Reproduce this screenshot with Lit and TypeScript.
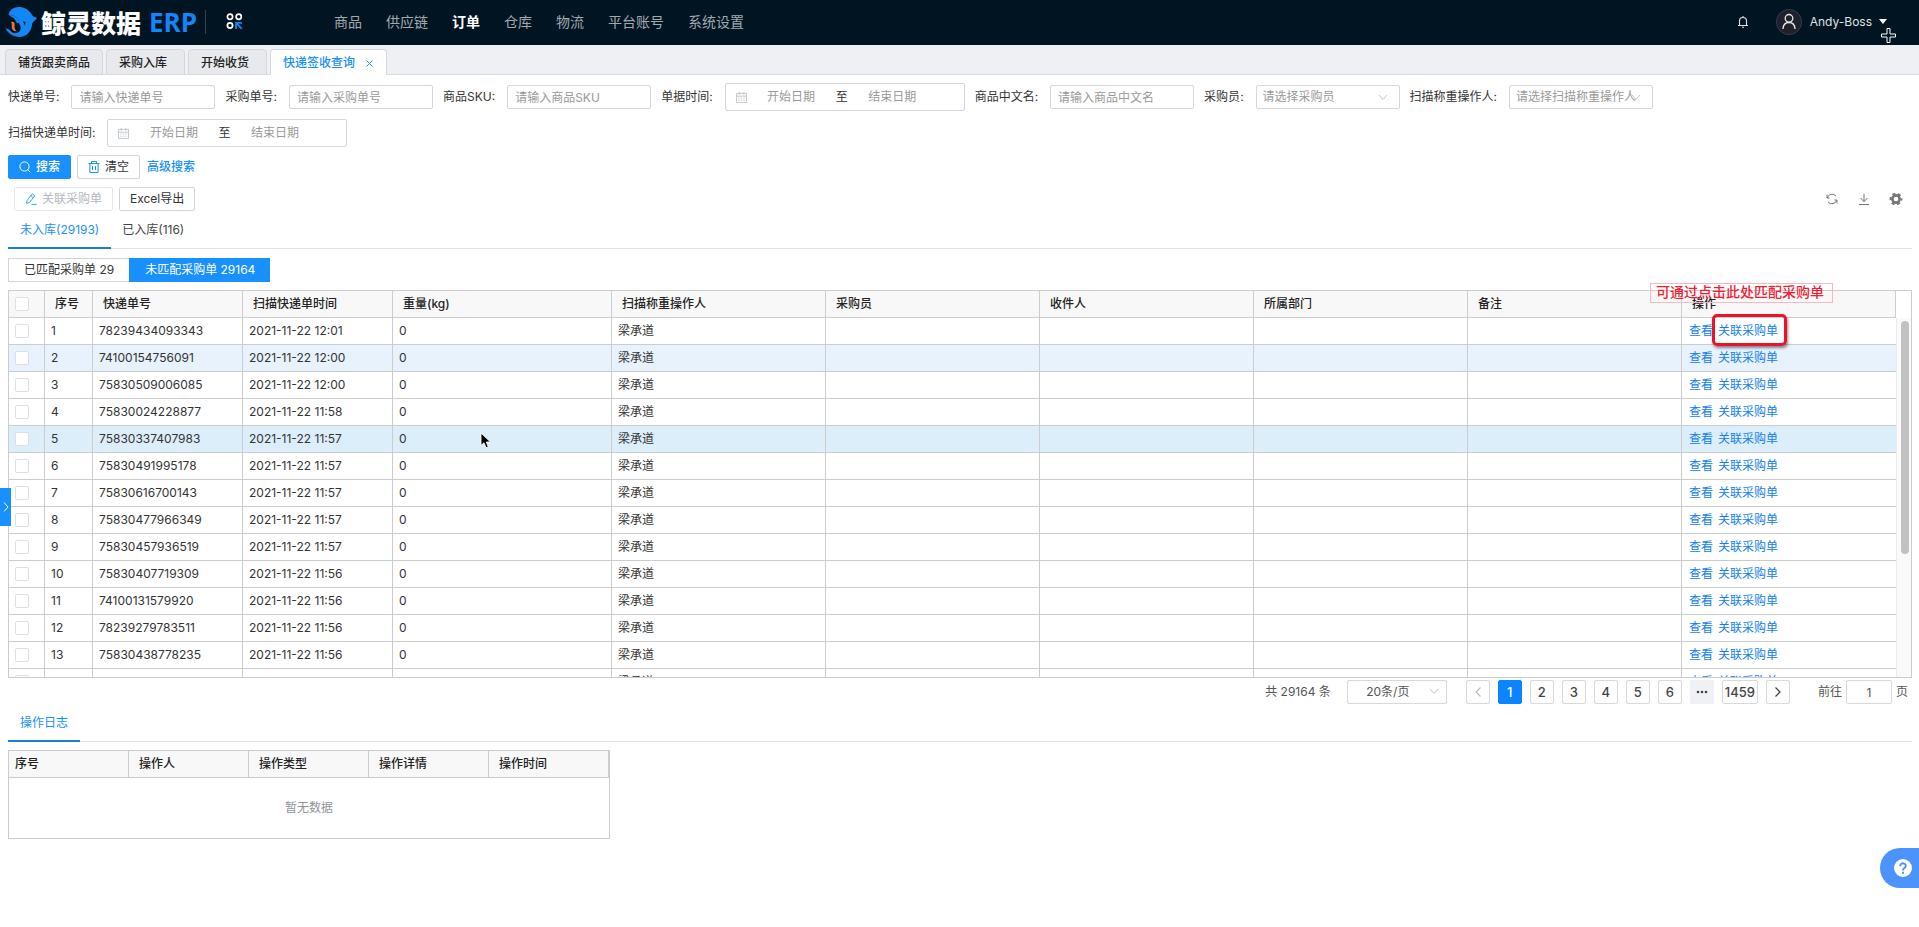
import { LitElement, html, css, nothing } from "lit";
import { customElement } from "lit/decorators.js";
import { classMap } from "lit/directives/class-map.js";

const chevronDown = html`<svg class="chev" viewBox="0 0 10 10" width="10" height="10" aria-hidden="true"><path d="M1 3l4 4.500L9 3" fill="none" stroke="#c0c4cc" stroke-width="1"/></svg>`;

const calendar = html`<svg viewBox="0 0 12 12" width="11" height="11" aria-hidden="true"><g fill="none" stroke="#c0c4cc"><path d="M.5 1.500h11v10H.5zM.5 4.500h11M3.500 0v3M8.500 0v3"/><path d="M2.500 6.500h7M2.500 9h7" stroke-dasharray="1.400 1.400"/></g></svg>`;

@customElement("top-bar")
class TopBar extends LitElement {
  static styles = css`
    :host { display: block; }
    .bar { display: flex; align-items: center; box-sizing: border-box; height: 45px; background: #001422; color: #fff; padding: 0 32px 2px 5px; }
    .brand { display: flex; align-items: center; font: 900 25px/32px "Noto Sans CJK SC", sans-serif; }
    .brand svg { margin-right: 4px; }
    .erp { color: #1287fb; font: bold 26px/32px "Open Sans", sans-serif; margin-left: 8px; }
    .rule { width: 1px; height: 24px; background: #33434f; margin: 0 20px 0 8px; }
    .apps, .bell, .user { background: none; border: 0; padding: 0; color: inherit; display: flex; align-items: center; font: inherit; }
    .menu { display: flex; gap: 24px; margin-left: 91px; flex: 1; }
    .menu a { color: #a1a9af; text-decoration: none; white-space: nowrap; }
    .menu a.on { color: #fff; font-weight: 700; }
    .bell { margin-right: 27px; }
    .user { color: #dfe2e4; font-size: 12px; }
    .user .face { margin-right: 8px; }
    .user .caret { margin-left: 7px; }
  `;
  render() {
    const items = ["商品", "供应链", "订单", "仓库", "物流", "平台账号", "系统设置"];
    return html`<header class="bar">
      <div class="brand">
        <svg viewBox="0 0 32 32" width="32" height="32" aria-hidden="true">
          <path d="M3.500 8.500C4.500 3.500 9.500.5 15 1c6 .5 10 4 12.300 8.300 1 1.800 2.500 2 4.700 2.400-1.300 2.800-3.600 3.600-4.800 5.800C26.500 26 21 31 14.500 31 8 31 3 27.500.4 22.300c2.600.4 4.800 1.700 6.200 3.700 2.600 2 6.200 1.500 8.200-1 1.400-2 1-4 .2-5.800L13.800 17c-1.800 0-2.700-1-3.300-2.600C9 11.400 5.500 11 3.500 8.500z" fill="#1287f5"/>
          <path d="M5 9c4 .3 7.500 2 9 6" fill="none" stroke="#0a5fb5" stroke-width=".7"/>
          <path d="M17.800 15.300l2.700.6-.5 3.500z" fill="#001422"/>
          <path d="M6 16c3-1 4 1 3.600 3.500C9.300 22 10 24 11.800 25.200 8.500 25.500 6.500 23.500 6.700 20.500c.1-1.800.3-3-.7-4.500z" fill="#ee6f35"/>
        </svg>
        <span>鲸灵数据</span><span class="erp">ERP</span>
      </div>
      <span class="rule"></span>
      <button class="apps" aria-label="应用">
        <svg viewBox="0 0 17 17" width="17" height="17" aria-hidden="true"><g fill="none" stroke="#fff" stroke-width="1.700"><circle cx="4" cy="3.700" r="2.600"/><circle cx="12.700" cy="3.700" r="2.600"/><circle cx="4" cy="12.500" r="2.600"/></g><path d="M10 16V9.800h6M10.500 10.300l5.300 5.500" fill="none" stroke="#1287fb" stroke-width="1.800"/></svg>
      </button>
      <nav class="menu">${items.map((t) => html`<a href="#" class=${t === "订单" ? "on" : ""}>${t}</a>`)}</nav>
      <button class="bell" aria-label="消息">
        <svg viewBox="0 0 12 12" width="12" height="12" aria-hidden="true"><path d="M1 9.500h10M2.500 9.500V5a3.500 3.500 0 017 0v4.500M6 0v1.500M5 11.300h2" fill="none" stroke="#dfe2e4" stroke-width="1.100"/></svg>
      </button>
      <button class="user">
        <svg class="face" viewBox="0 0 26 26" width="26" height="26" aria-hidden="true"><circle cx="13" cy="13" r="12.600" fill="#20202c" stroke="#4b5060" stroke-width=".6"/><circle cx="13" cy="9.300" r="3.800" fill="none" stroke="#e8e8ea" stroke-width="1.300"/><path d="M7 20c.2-4 2.500-6.500 6-6.500s5.800 2.500 6 6.500" fill="none" stroke="#e8e8ea" stroke-width="1.300"/></svg>
        Andy-Boss
        <svg class="caret" viewBox="0 0 8 5" width="8" height="5" aria-hidden="true"><path d="M0 0h8L4 5z" fill="#fff"/></svg>
      </button>
    </header>`;
  }
}

@customElement("page-tabs")
class PageTabs extends LitElement {
  static styles = css`
    :host { display: block; }
    .tabs { display: flex; align-items: flex-end; gap: 3px; height: 29px; padding: 0 5px; background: #eff0f4; border-bottom: 1px solid #d9dce2; }
    .tab { display: flex; align-items: center; box-sizing: border-box; height: 26px; min-width: 79px; padding: 2px 12px 0; margin-bottom: -1px; border: 1px solid #d4d7dd; border-radius: 4px 4px 0 0; background: #e8e9ed; color: #222; font: inherit; font-weight: 500; white-space: nowrap; }
    .on { background: #fff; color: #1890ff; border-bottom-color: #fff; }
    .on svg { margin-left: 10px; }
  `;
  render() {
    return html`<nav class="tabs">
      ${["铺货跟卖商品", "采购入库", "开始收货"].map((t) => html`<button class="tab">${t}</button>`)}
      <button class="tab on">快递签收查询<svg viewBox="0 0 9 9" width="9" height="9" aria-hidden="true"><path d="M1.500 1.500l6 6M7.500 1.500l-6 6" stroke="#1890ff" fill="none"/></svg></button>
    </nav>`;
  }
}

@customElement("search-form")
class SearchForm extends LitElement {
  static styles = css`
    :host { display: block; }
    .form { display: flex; flex-wrap: wrap; gap: 8px 10px; }
    .item { display: flex; align-items: center; height: 28px; color: #333; }
    .item > label { padding-right: 12px; white-space: nowrap; }
    .box { box-sizing: border-box; width: 144px; height: 24px; border: 1px solid #d6d6da; border-radius: 2px; background: #fff; padding: 0 7px; margin: 0; font: inherit; color: #999; appearance: none; outline: 0; }
    .pick { position: relative; display: flex; }
    .pick .box { padding: 0 6px; }
    .pick .chev { position: absolute; right: 12px; top: 7px; pointer-events: none; }
    .range { display: flex; align-items: center; box-sizing: border-box; width: 240px; height: 28px; border: 1px solid #d6d6da; border-radius: 2px; padding: 0 27px 0 10px; }
    .range input { flex: 1; min-width: 0; padding: 0; border: 0; text-align: center; font: inherit; outline: 0; background: none; }
    ::placeholder { color: #999; opacity: 1; }
  `;
  text(id: string, label: string, ph: string) {
    return html`<div class="item"><label for=${id}>${label}:</label><input class="box" id=${id} type="text" placeholder=${ph} /></div>`;
  }
  pick(id: string, label: string, ph: string) {
    return html`<div class="item"><label for=${id}>${label}:</label><span class="pick"><select class="box" id=${id}><option>${ph}</option></select>${chevronDown}</span></div>`;
  }
  range(id: string, label: string) {
    return html`<div class="item"><label for=${id}>${label}:</label><div class="range">${calendar}<input id=${id} type="text" placeholder="开始日期" /><span>至</span><input type="text" aria-label="${label} 结束" placeholder="结束日期" /></div></div>`;
  }
  render() {
    return html`<form class="form">
      ${this.text("express", "快递单号", "请输入快递单号")}
      ${this.text("purchase", "采购单号", "请输入采购单号")}
      ${this.text("sku", "商品SKU", "请输入商品SKU")}
      ${this.range("bill", "单据时间")}
      ${this.text("name", "商品中文名", "请输入商品中文名")}
      ${this.pick("buyer", "采购员", "请选择采购员")}
      ${this.pick("operator", "扫描称重操作人", "请选择扫描称重操作人")}
      ${this.range("scan", "扫描快递单时间")}
    </form>`;
  }
}

type Row = [string, string];
const rows: Row[] = [
  ["78239434093343", "12:01"], ["74100154756091", "12:00"], ["75830509006085", "12:00"],
  ["75830024228877", "11:58"], ["75830337407983", "11:57"], ["75830491995178", "11:57"],
  ["75830616700143", "11:57"], ["75830477966349", "11:57"], ["75830457936519", "11:57"],
  ["75830407719309", "11:56"], ["74100131579920", "11:56"], ["78239279783511", "11:56"],
  ["75830438778235", "11:56"], ["75830466239265", "11:56"],
];

@customElement("parcel-table")
class ParcelTable extends LitElement {
  static styles = css`
    :host { display: block; }
    .wrap { position: relative; border: 1px solid #ccc; }
    .head { padding-right: 15px; }
    .body { display: flex; height: 359px; }
    /* the callout frame may rise above the first row, while the last row is cut at the bottom */
    .view { flex: 1; min-width: 0; clip-path: inset(-8px 0 0 0); }
    .rail { box-sizing: border-box; width: 15px; padding: 3px 2px 3px 3px; background: #fafafa; border-left: 1px solid #ebebeb; }
    .thumb { width: 8px; height: 66%; margin: 0 auto; border-radius: 4px; background: #c1c1c1; }
    table { width: 100%; table-layout: fixed; border-collapse: separate; border-spacing: 0; }
    .c1 { width: 36px; } .c2 { width: 48px; } .c3, .c4 { width: 150px; } .c5 { width: 219px; }
    th, td { box-sizing: border-box; height: 27px; line-height: 20px; border-right: 1px solid #ccc; border-bottom: 1px solid #ccc; text-align: left; white-space: nowrap; }
    th { background: #f8f8f8; padding: 0 10px; font-weight: 500; color: #222; }
    td { padding: 0 6px; color: #333; }
    .view td:last-child { border-right: 0; }
    .light td { background: #e8f2fd; }
    .hover td { background: #ddeefb; }
    .tick { padding: 0 6px; }
    input { appearance: none; display: block; box-sizing: border-box; width: 14px; height: 14px; margin: 0; border: 1px solid #dcdfe6; border-radius: 2px; background: #fff; }
    a { color: #1280f0; text-decoration: none; }
    .ops { display: flex; gap: 5px; padding-left: 1px; }
    .mark { position: relative; }
    .mark::after { content: ""; position: absolute; left: -6px; top: -7px; right: -9px; bottom: -5px; border: 3px solid #ee1229; border-radius: 5px; box-shadow: 1px 2px 3px rgba(0,0,0,.45); }
    .note { position: absolute; z-index: 2; right: 78px; top: -8px; padding: 0 8px 3px 5px; border: 1px solid #f6b9bf; color: #f01f35; font-size: 14px; line-height: 15px; font-weight: 500; }
    .spot { position: relative; }
    .pointer { position: absolute; left: 87px; top: 6px; }
  `;
  cols() {
    return html`<colgroup><col class="c1" /><col class="c2" /><col class="c3" /><col class="c4" /><col class="c5" /><col span="6" /></colgroup>`;
  }
  render() {
    const heads = ["序号", "快递单号", "扫描快递单时间", "重量(kg)", "扫描称重操作人", "采购员", "收件人", "所属部门", "备注", "操作"];
    return html`<div class="wrap">
      <div class="head"><table>${this.cols()}<thead><tr><th class="tick"><input type="checkbox" aria-label="全选" /></th>${heads.map((h) => html`<th>${h}</th>`)}</tr></thead></table></div>
      <div class="body"><div class="view"><table>${this.cols()}<tbody>
        ${rows.map(([no, time], i) => html`<tr class=${classMap({ light: i === 1, hover: i === 4 })}>
          <td class="tick"><input type="checkbox" aria-label=${no} /></td>
          <td>${i + 1}</td><td>${no}</td><td>2021-11-22 ${time}</td>
          <td class="spot">0${i === 4 ? html`<svg class="pointer" viewBox="0 0 12 18" width="12" height="18" aria-hidden="true"><path d="M1 1v12.500l3-2.700 2 5 2.300-1-2-4.800h4.200z" fill="#000" stroke="#fff" stroke-width=".9"/></svg>` : nothing}</td>
          <td>梁承道</td><td></td><td></td><td></td><td></td>
          <td><div class="ops"><a href="#">查看</a><a href="#" class=${i === 0 ? "mark" : ""}>关联采购单</a></div></td>
        </tr>`)}
      </tbody></table></div><div class="rail"><div class="thumb"></div></div></div>
      <div class="note">可通过点击此处匹配采购单</div>
    </div>`;
  }
}

@customElement("page-nav")
class PageNav extends LitElement {
  static styles = css`
    :host { display: block; }
    .nav { display: flex; justify-content: flex-end; align-items: center; gap: 8px; height: 24px; color: #555; padding-right: 4px; }
    .size { position: relative; display: flex; margin: 0 11px 0 8px; }
    .size select { box-sizing: border-box; width: 100px; height: 24px; appearance: none; margin: 0; padding: 0 18px 0 0; border: 1px solid #d9d9d9; border-radius: 2px; background: #fff; text-align: center; text-align-last: center; font: inherit; color: #555; }
    .size .chev { position: absolute; right: 8px; top: 6px; pointer-events: none; }
    button { display: flex; align-items: center; justify-content: center; box-sizing: border-box; min-width: 24px; height: 24px; margin: 0; padding: 0 2px; border: 1px solid #d9d9d9; border-radius: 2px; background: #fff; color: #444; font: inherit; font-size: 13px; font-weight: 500; }
    .on { background: #0a84ff; border-color: #0a84ff; color: #fff; }
    .more { background: #f0f1f4; border-color: #f0f1f4; }
    .jump { display: flex; align-items: center; gap: 4px; margin-left: 20px; }
    .jump input { box-sizing: border-box; width: 46px; height: 24px; padding: 0; margin: 0; border: 1px solid #d9d9d9; border-radius: 2px; text-align: center; font: inherit; color: #555; }
  `;
  render() {
    return html`<nav class="nav">
      <span>共 29164 条</span>
      <span class="size"><select aria-label="每页条数"><option>20条/页</option></select>${chevronDown}</span>
      <button aria-label="上一页"><svg viewBox="0 0 8 12" width="8" height="12"><path d="M6.500 1.500L2 6l4.500 4.500" fill="none" stroke="#b4b8c0" stroke-width="1.200"/></svg></button>
      <button class="on">1</button>
      ${[2, 3, 4, 5, 6].map((n) => html`<button>${n}</button>`)}
      <button class="more" aria-label="更多"><svg viewBox="0 0 12 4" width="12" height="4" fill="#444"><circle cx="2" cy="2" r="1.300"/><circle cx="6" cy="2" r="1.300"/><circle cx="10" cy="2" r="1.300"/></svg></button>
      <button>1459</button>
      <button aria-label="下一页"><svg viewBox="0 0 8 12" width="8" height="12"><path d="M1.500 1.500L6 6l-4.500 4.500" fill="none" stroke="#444" stroke-width="1.300"/></svg></button>
      <span class="jump"><label for="page">前往</label><input id="page" type="text" value="1" /><span>页</span></span>
    </nav>`;
  }
}

@customElement("app-root")
class AppRoot extends LitElement {
  static styles = css`
    :host { display: block; position: relative; box-sizing: border-box; min-height: 100vh; overflow: hidden; background: #fff; color: #333; font: 12px/18px Inter, "Noto Sans CJK SC", sans-serif; }
    top-bar { font-size: 14px; }
    main { padding: 8px 7px 0 8px; }
    .btn { display: inline-flex; align-items: center; box-sizing: border-box; height: 24px; margin: 0; padding: 0 10px; gap: 5px; border: 1px solid #d3d4d8; border-radius: 2px; background: #fff; color: #333; font: inherit; white-space: nowrap; }
    .primary { background: #1890ff; border-color: #1890ff; color: #fff; font-weight: 500; }
    .muted { border-color: #e4e7ed; color: #b4b8c0; }
    .row { display: flex; align-items: center; gap: 6px; margin-top: 8px; }
    .link { color: #1890ff; text-decoration: none; padding-left: 1px; font-weight: 500; }
    .tools { margin-left: auto; display: flex; gap: 18px; padding-right: 9px; }
    .icon { display: flex; border: 0; padding: 0; background: none; }
    .group { padding-left: 6px; }
    .tabs { display: flex; border-bottom: 1px solid #e0e2e6; }
    .tabs button { height: 34px; box-sizing: content-box; margin: 0 0 -1px; padding: 2px 12px 0; border: 0; border-bottom: 2px solid transparent; background: none; font: inherit; color: #444; white-space: nowrap; }
    .tabs button + button { padding-left: 11px; }
    .tabs .on { color: #1890ff; border-bottom-color: #1a7fd4; }
    .switch { display: flex; margin: 9px 0 8px; }
    .switch .btn { border-radius: 0; padding: 0 15px; border-right: 0; }
    .switch .primary { font-weight: 400; }
    page-nav { margin: 2px 0 0; }
    .log { table-layout: fixed; width: 602px; margin-top: 8px; border: 1px solid #ccc; border-collapse: separate; border-spacing: 0; }
    .log th { height: 26px; padding: 0 0 0 10px; text-align: left; font-weight: 500; color: #222; background: #f8f8f8; border-right: 1px solid #ccc; border-bottom: 1px solid #ccc; }
    .log th:first-child { padding-left: 6px; }
    .log td { height: 60px; padding: 0; text-align: center; color: #909399; }
    .side { position: absolute; left: 0; top: 488px; display: flex; align-items: center; width: 11px; height: 38px; padding: 0 0 0 2px; border: 0; background: #1890ff; }
    .help { position: absolute; right: 0; bottom: 39px; display: flex; align-items: center; width: 39px; height: 40px; padding: 0 0 0 14px; border: 0; border-radius: 20px 0 0 20px; background: #4c93fd; }
    .cross { position: absolute; right: 23px; top: 28px; }
  `;
  render() {
    return html`
      <top-bar></top-bar>
      <page-tabs></page-tabs>
      <main>
        <search-form></search-form>
        <div class="row">
          <button class="btn primary"><svg viewBox="0 0 12 12" width="12" height="12"><circle cx="5.500" cy="5.500" r="4.600" fill="none" stroke="#fff"/><path d="M8.800 8.800l2.500 2.500" stroke="#fff"/></svg>搜索</button>
          <button class="btn"><svg viewBox="0 0 12 12" width="12" height="12"><path d="M.5 2.500h11M3.500 2.500v-2h5v2M1.900 2.500v9h8.200v-9M4.500 5v4M7.500 5v4" fill="none" stroke="#1890ff"/></svg>清空</button>
          <a class="link" href="#">高级搜索</a>
        </div>
        <div class="row group">
          <button class="btn muted" disabled><svg viewBox="0 0 12 12" width="12" height="12"><path d="M2 7.500L7.200.8l2.600 2-5.200 6.700-3 .9zM5.800 2.600l2.600 2M6.500 11.400h5" fill="none" stroke="#409eff"/></svg>关联采购单</button>
          <button class="btn">Excel导出</button>
          <div class="tools">
            <button class="icon" aria-label="刷新"><svg viewBox="0 0 14 14" width="14" height="14"><path d="M2.300 6A5 5 0 0111 4M11.700 8A5 5 0 013 10M2 2.500V6h2.500M12 11.500V8H9.500" fill="none" stroke="#777"/></svg></button>
            <button class="icon" aria-label="下载"><svg viewBox="0 0 14 14" width="14" height="14"><path d="M7 1.500v8M3.500 6L7 9.500 10.500 6M2 12.500h10" fill="none" stroke="#777"/></svg></button>
            <button class="icon" aria-label="设置"><svg viewBox="0 0 14 14" width="14" height="14"><circle cx="7" cy="7" r="3.600" fill="none" stroke="#777" stroke-width="2.600"/><circle cx="7" cy="7" r="5.400" fill="none" stroke="#777" stroke-width="2" stroke-dasharray="3 2.655" stroke-dashoffset="1.500"/></svg></button>
          </div>
        </div>
        <div class="tabs">
          <button class="on">未入库(29193)</button><button>已入库(116)</button>
        </div>
        <div class="switch">
          <button class="btn">已匹配采购单 29</button><button class="btn primary">未匹配采购单 29164</button>
        </div>
        <parcel-table></parcel-table>
        <page-nav></page-nav>
        <div class="tabs"><button class="on">操作日志</button></div>
        <table class="log">
          <thead><tr>${["序号", "操作人", "操作类型", "操作详情", "操作时间"].map((h) => html`<th>${h}</th>`)}</tr></thead>
          <tbody><tr><td colspan="5">暂无数据</td></tr></tbody>
        </table>
      </main>
      <button class="side" aria-label="展开"><svg viewBox="0 0 8 12" width="8" height="12"><path d="M2 1.500L6 6l-4 4.500" fill="none" stroke="#fff"/></svg></button>
      <button class="help" aria-label="帮助"><svg viewBox="0 0 18 18" width="18" height="18"><circle cx="9" cy="9" r="9" fill="#fff"/><path d="M6.200 7.200c0-4 5.800-3.600 5.600-.2-.1 2-2.800 2-2.800 4.400M9 12.800v2" fill="none" stroke="#4c93fd" stroke-width="1.900"/></svg></button>
      <svg class="cross" viewBox="0 0 15 15" width="15" height="15" aria-hidden="true"><path d="M6 .5h3V6h5.500v3H9v5.500H6V9H.5V6H6z" fill="#001422" stroke="#fff"/></svg>
    `;
  }
}
